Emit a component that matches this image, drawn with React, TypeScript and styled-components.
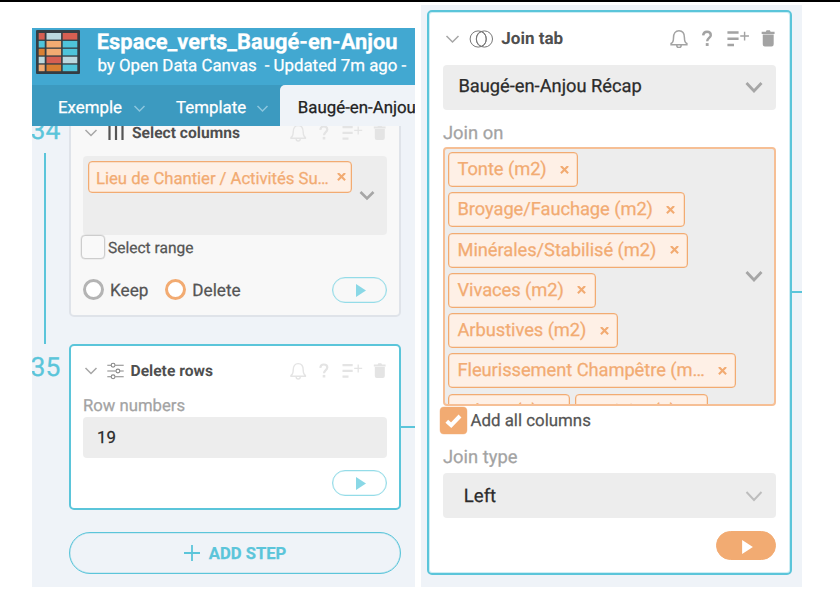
import React from "react";
import styled, { createGlobalStyle, css } from "styled-components";

const color = {
  cyan: "#5bc5da",
  orange: "#f2ab72",
  orangeSoft: "#f6bf95",
  chip: "#fef0e6",
  canvas: "#eff3f8",
  field: "#ededed",
};

const GlobalStyle = createGlobalStyle`
  *, *::before, *::after { box-sizing: border-box; }
  body {
    margin: 0;
    background: #fff;
    font-family: Roboto, "Liberation Sans", sans-serif;
    text-rendering: geometricPrecision;
    -webkit-text-stroke: 0.25px currentColor;
  }
  svg { display: block; flex: none; }
`;

const Screen = styled.div`
  width: 840px;
  height: 599px;
  overflow: hidden;
  background: #fff;
  border-top: 2px solid #000;
`;

const Panes = styled.div`
  display: flex;
  align-items: flex-start;
  padding-left: 32px;
`;

const StepsPane = styled.section`
  width: 382.6px;
  height: 559px;
  margin-top: 26px;
  overflow: hidden;
  display: flex;
  flex-direction: column;
  background: ${color.canvas};
`;

const JoinPane = styled.section`
  width: 381px;
  height: 582px;
  margin: 3px 0 0 6.4px;
  padding: 5px 0 0 6.5px;
  display: flex;
  align-items: flex-start;
  background: ${color.canvas};
`;

const Header = styled.header`
  flex: none;
  height: 57px;
  display: flex;
  padding: 2px 0 0 3.5px;
  color: #fff;
  background: #42a8d1;
`;

const Titles = styled.div`
  margin-left: 17.3px;
  padding-top: 1px;
  white-space: nowrap;
`;

const Title = styled.h1`
  margin: 0;
  font-size: 21.9px;
  line-height: 24px;
  font-weight: 700;
`;

const Byline = styled.div`
  display: flex;
  gap: 8px;
  font-size: 16.85px;
  line-height: 22px;
  padding-left: 0.6px;
`;

const TabBar = styled.nav`
  flex: none;
  height: 41px;
  display: flex;
  background: #3c9ac0;
  color: #fff;
`;

const Tab = styled.div<{ $width: number; $inset: number; $active?: boolean }>`
  width: ${(p) => p.$width}px;
  flex: none;
  display: flex;
  align-items: center;
  justify-content: space-between;
  padding: 4px 11.5px 0 ${(p) => p.$inset}px;
  font-size: 16.85px;
  white-space: nowrap;
  ${(p) =>
    p.$active &&
    css`
      color: #222;
      background: ${color.canvas};
      border-top-left-radius: 5px;
    `}

  svg {
    margin-top: 2px;
  }
`;

const StepList = styled.div`
  flex: 1;
  overflow: hidden;
`;

const Step = styled.div<{ $top: number }>`
  display: flex;
  align-items: flex-start;
  margin-top: ${(p) => p.$top}px;
`;

const Gutter = styled.div<{ $height: number }>`
  width: 37px;
  height: ${(p) => p.$height}px;
  flex: none;
  display: flex;
  flex-direction: column;
  color: ${color.cyan};
`;

const StepNumber = styled.div`
  margin: 9.7px 0 0 -1.5px;
  font-size: 26.5px;
  line-height: 30px;
`;

const Track = styled.div`
  flex: 1;
  width: 2px;
  margin: 7px 0 0 12px;
  background: ${color.cyan};
`;

const Card = styled.article<{ $height: number; $idle?: boolean }>`
  width: 332px;
  height: ${(p) => p.$height}px;
  flex: none;
  padding: 5px 12px 0;
  border: 2px solid ${(p) => (p.$idle ? "#dfe3e9" : color.cyan)};
  border-radius: 5px;
  background: ${(p) => (p.$idle ? "#f8f8f8" : "#fff")};
`;

const JoinCard = styled(Card)`
  width: 365px;
  padding: 5px 14px 0 13.5px;
  box-shadow: inset 0 0 0 1px rgba(91, 197, 218, 0.3);
`;

const Connector = styled.div<{ $top: number }>`
  flex: 1;
  height: 2px;
  margin-top: ${(p) => p.$top}px;
  background: ${color.cyan};
`;

const CardHead = styled.div<{ $large?: boolean }>`
  height: ${(p) => (p.$large ? 42 : 40)}px;
  display: flex;
  align-items: center;
  padding: ${(p) => (p.$large ? 1 : 0)}px 1.5px 0 ${(p) => (p.$large ? 1.8 : 1)}px;
  color: #9b9b9b;
`;

const KindIcon = styled.span<{ $left: number; $width: number }>`
  margin-left: ${(p) => p.$left}px;
  width: ${(p) => p.$width}px;
`;

const CardTitle = styled.h2<{ $size: number }>`
  flex: 1;
  margin: 0;
  font-size: ${(p) => p.$size}px;
  line-height: 20px;
  font-weight: 700;
  color: #4f4f4f;
  -webkit-text-stroke-width: 0;
`;

const Label = styled.div<{ $top: number; $large?: boolean }>`
  margin-top: ${(p) => p.$top}px;
  font-size: ${(p) => (p.$large ? 18.35 : 16.7)}px;
  line-height: 20px;
  color: #a3a3a3;
`;

const Field = styled.div<{ $top: number; $height: number; $inset: number; $size: number; $shift?: number }>`
  height: ${(p) => p.$height}px;
  margin-top: ${(p) => p.$top}px;
  padding: ${(p) => Math.max(p.$shift ?? 0, 0)}px 13px ${(p) => Math.max(-(p.$shift ?? 0), 0)}px
    ${(p) => p.$inset}px;
  display: flex;
  align-items: center;
  justify-content: space-between;
  border-radius: 4px;
  font-size: ${(p) => p.$size}px;
  white-space: nowrap;
  color: #2b2b2b;
  background: ${color.field};
`;

const MultiField = styled.div<{ $top: number; $height: number; $focus?: boolean }>`
  height: ${(p) => p.$height}px;
  margin-top: ${(p) => p.$top}px;
  display: flex;
  align-items: center;
  overflow: hidden;
  border-radius: 4px;
  background: ${color.field};
  ${(p) =>
    p.$focus
      ? css`
          border: 2px solid ${color.orangeSoft};
          padding: 0 11px 0 3px;
        `
      : css`
          padding: 0 12px 0 4.7px;
        `}
`;

const Chips = styled.div<{ $top: number }>`
  flex: 1;
  align-self: flex-start;
  display: flex;
  flex-wrap: wrap;
  gap: 5.25px 5px;
  padding-top: ${(p) => p.$top}px;
`;

const Chip = styled.span<{ $small?: boolean }>`
  display: flex;
  align-items: center;
  height: ${(p) => (p.$small ? 32 : 35)}px;
  padding: ${(p) => (p.$small ? "3.5px 5.5px 0 7.4px" : "1px 8.5px 0 8.5px")};
  gap: ${(p) => (p.$small ? 8 : 13.3)}px;
  border: 1px solid ${color.orange};
  box-shadow: inset 0 0 0 0.5px rgba(242, 171, 114, 0.5);
  border-radius: 4px;
  font-size: ${(p) => (p.$small ? 16.73 : 18.3)}px;
  letter-spacing: -0.05px;
  line-height: 20px;
  white-space: nowrap;
  color: ${color.orange};
  background: ${color.chip};

  svg {
    margin-bottom: ${(p) => (p.$small ? 2 : 0)}px;
  }
`;

const CheckRow = styled.div<{ $large?: boolean }>`
  display: flex;
  align-items: center;
  margin: ${(p) => (p.$large ? "1px 0 0 -3px" : "0.8px 0 0 -2.5px")};
  gap: 3.5px;
  font-size: ${(p) => (p.$large ? 16.87 : 15.52)}px;
  line-height: 20px;
  color: #555;
`;

const CheckText = styled.span`
  padding-top: 1px;
`;

const Checkbox = styled.span<{ $checked?: boolean }>`
  width: ${(p) => (p.$checked ? 27 : 24)}px;
  height: ${(p) => (p.$checked ? 27 : 24)}px;
  display: flex;
  align-items: center;
  justify-content: center;
  border-radius: 4px;
  background: ${(p) => (p.$checked ? color.orange : "#f9f9f9")};
  border: ${(p) => (p.$checked ? 0 : 1)}px solid #cdcdcd;
  box-shadow: 0 0 0 0.5px ${(p) => (p.$checked ? "rgba(242,171,114,.4)" : "rgba(205,205,205,.5)")};
`;

const ActionRow = styled.div<{ $top: number }>`
  display: flex;
  align-items: center;
  justify-content: flex-end;
  margin-top: ${(p) => p.$top}px;
`;

const Radio = styled.span<{ $selected?: boolean }>`
  width: 21px;
  height: 21px;
  border-radius: 50%;
  border: 3px solid ${(p) => (p.$selected ? color.orange : "#b4b4b4")};
  background: #fff;
`;

const ChoiceText = styled.span`
  margin: 0 17px 0 6px;
  padding-top: 3px;
  font-size: 17.15px;
  line-height: 20px;
  color: #555;
`;

const Spacer = styled.span`
  flex: 1;
`;

const RunButton = styled.button<{ $filled?: boolean }>`
  width: ${(p) => (p.$filled ? 60 : 55)}px;
  height: ${(p) => (p.$filled ? 29 : 26)}px;
  padding: 2px 0 0 2.5px;
  display: flex;
  align-items: center;
  justify-content: center;
  border-radius: 15px;
  border: 1px solid ${(p) => (p.$filled ? color.orange : "#94dce8")};
  box-shadow: ${(p) => (p.$filled ? "none" : "inset 0 0 0 .5px rgba(148,220,232,.5)")};
  color: ${(p) => (p.$filled ? "#fff" : "#8ad8e6")};
  background: ${(p) => (p.$filled ? color.orange : "transparent")};
`;

const AddStep = styled.button`
  width: 332px;
  height: 42px;
  margin: 22px 0 0 37px;
  padding: 1px 0 0;
  display: flex;
  align-items: center;
  justify-content: center;
  gap: 9px;
  border: 1px solid ${color.cyan};
  border-radius: 21px;
  box-shadow: inset 0 0 0 0.5px rgba(91, 197, 218, 0.4);
  font: 700 16.64px Roboto, sans-serif;
  color: ${color.cyan};
  background: transparent;
`;

const ToolIcons = styled.svg<{ $faint?: boolean }>`
  color: ${(p) => (p.$faint ? "#e4e4e4" : "#a3a3a3")};
`;

const Chevron = ({ w = 12, h = 6.5, sw = 1.5, stroke = "#a6a6a6" }) => (
  <svg width={w + 2} height={h + 3} viewBox={`-1 -1.5 ${w + 2} ${h + 3}`} fill="none">
    <path d={`M.5 .5 L${w / 2} ${h - 0.5} L${w - 0.5} .5`} stroke={stroke} strokeWidth={sw} />
  </svg>
);

const Cross = () => (
  <svg width="9" height="9" viewBox="0 0 9 9" fill="none">
    <path d="M.9 0 8.1 7.2 M8.1 0 .9 7.2" stroke={color.orange} strokeWidth="2.1" />
  </svg>
);

const Play = ({ w = 10, h = 13 }) => (
  <svg width={w} height={h} viewBox="0 0 10 13">
    <path d="M0 0 10 6.5 0 13Z" fill="currentColor" />
  </svg>
);

const Tools = ({ faint }: { faint?: boolean }) => (
  <ToolIcons
    $faint={faint}
    width={faint ? 96 : 105}
    height={faint ? 18 : 19.7}
    viewBox="0 0 96 18"
    fill="none"
    stroke="currentColor"
  >
    <path
      d="M1 13.3c1.9-1 2.2-2.2 2.2-5.4 0-3.7 1.8-6.3 5-6.3s5 2.6 5 6.3c0 3.2.3 4.4 2.2 5.4v1H1z M6.2 15a2 2 0 0 0 4 0"
      strokeWidth="1.4"
    />
    <path d="M30.3 5.9c.2-2.2 1.4-3.4 3.5-3.4 2.2 0 3.5 1.2 3.5 3.1 0 2.5-3.3 2.7-3.3 5.6" strokeWidth="2.2" />
    <path d="M32.7 12.9h2.6v2.6h-2.6z" fill="currentColor" stroke="none" />
    <path d="M52.5 3.2h10.2M52.5 8.9h10.2M52.5 14.6h6" strokeWidth="2.2" />
    <path d="M68.2 2.4v8M64.2 6.4h8" strokeWidth="1.3" />
    <path d="M83.8 2.4h3.8l.7-1.2h3l.7 1.2h3.6v2.2H83.8z M84.8 5h10v9a2 2 0 0 1-2 2h-6a2 2 0 0 1-2-2z" fill="currentColor" stroke="none" />
  </ToolIcons>
);

const ColumnsIcon = () => (
  <svg width="17" height="18" viewBox="0 0 17 18">
    <path d="M2.5 1v15M9 1v15M15.5 1v15" stroke="#555" strokeWidth="2.2" />
  </svg>
);

const SlidersIcon = () => (
  <svg width="17" height="18" viewBox="0 0 17 18" fill="none" stroke="#888" strokeWidth="1.1">
    <path d="M.3 3.2H4M8.2 3.2h8.5M.3 9h8.5M13 9h3.7M.3 14.8H4M8.2 14.8h8.5" />
    <circle cx="6.1" cy="3.2" r="1.9" />
    <circle cx="10.9" cy="9" r="1.9" />
    <circle cx="6.1" cy="14.8" r="1.9" />
  </svg>
);

const JoinIcon = () => (
  <svg width="24" height="18" viewBox="0 0 24 18" fill="none" stroke="#777" strokeWidth="1">
    <circle cx="9.2" cy="9" r="8.1" />
    <circle cx="15.4" cy="9" r="8.1" />
    <ellipse cx="12.3" cy="9" rx="4.9" ry="7.3" />
  </svg>
);

const CheckIcon = () => (
  <svg width="17" height="14" viewBox="0 0 17 14" fill="none">
    <path d="M1.8 7.2 6.2 11.2 15 2" stroke="#fff" strokeWidth="4" />
  </svg>
);

const logoRows = [
  ["#d65f52", "#bcd8de", "#d65f52"],
  ["#4fc4da", "#f2ab72", "#4fc4da"],
  ["#d97f33", "#f2ab72", "#4fc4da"],
  ["#bcd8de", "#d65f52", "#bcd8de"],
  ["#f2ab72", "#d97f33", "#4fc4da"],
];
const logoColumns = [
  [2.7, 6],
  [10.5, 14.6],
  [26.7, 14.6],
];

const Logo = () => (
  <svg width="44" height="44" viewBox="0 0 44 44">
    <rect width="44" height="44" rx="1" fill="#343d43" />
    {logoRows.map((row, r) =>
      row.map((fill, c) => (
        <rect key={`${r}${c}`} x={logoColumns[c][0]} y={3 + r * 7.9} width={logoColumns[c][1]} height="6.6" fill={fill} />
      ))
    )}
  </svg>
);

const joinColumns = [
  "Tonte (m2)",
  "Broyage/Fauchage (m2)",
  "Minérales/Stabilisé (m2)",
  "Vivaces (m2)",
  "Arbustives (m2)",
  "Fleurissement Champêtre (m…",
  "Arbres (u)",
  "Topiaire (u)",
];

export default function App() {
  return (
    <>
      <GlobalStyle />
      <Screen>
        <Panes>
          <StepsPane>
            <Header>
              <Logo />
              <Titles>
                <Title>Espace_verts_Baugé-en-Anjou</Title>
                <Byline>
                  <span>by Open Data Canvas</span>
                  <span>- Updated 7m ago -</span>
                </Byline>
              </Titles>
            </Header>
            <TabBar>
              <Tab $width={125.5} $inset={26}>
                Exemple
                <Chevron w={11} h={6} stroke="#8cc6de" />
              </Tab>
              <Tab $width={122.5} $inset={18.5}>
                Template
                <Chevron w={11} h={6} stroke="#8cc6de" />
              </Tab>
              <Tab $width={134.6} $inset={17.8} $active>
                Baugé-en-Anjou
              </Tab>
            </TabBar>
            <StepList>
              <Step $top={-20}>
                <Gutter $height={237.5}>
                  <StepNumber>34</StepNumber>
                  <Track />
                </Gutter>
                <Card $height={211} $idle>
                  <CardHead>
                    <Chevron />
                    <KindIcon $left={9} $width={25}>
                      <ColumnsIcon />
                    </KindIcon>
                    <CardTitle $size={15.6}>Select columns</CardTitle>
                    <Tools faint />
                  </CardHead>
                  <MultiField $top={3} $height={78.5}>
                    <Chips $top={5}>
                      <Chip $small>
                        Lieu de Chantier / Activités Su…
                        <Cross />
                      </Chip>
                    </Chips>
                    <Chevron w={14} h={7.5} sw={2.6} />
                  </MultiField>
                  <CheckRow>
                    <Checkbox />
                    <CheckText>Select range</CheckText>
                  </CheckRow>
                  <ActionRow $top={17.5}>
                    <Radio />
                    <ChoiceText>Keep</ChoiceText>
                    <Radio $selected />
                    <ChoiceText>Delete</ChoiceText>
                    <Spacer />
                    <RunButton>
                      <Play />
                    </RunButton>
                  </ActionRow>
                </Card>
              </Step>
              <Step $top={0}>
                <Gutter $height={166}>
                  <StepNumber>35</StepNumber>
                </Gutter>
                <Card $height={166}>
                  <CardHead>
                    <Chevron />
                    <KindIcon $left={8.5} $width={24}>
                      <SlidersIcon />
                    </KindIcon>
                    <CardTitle $size={15.6}>Delete rows</CardTitle>
                    <Tools faint />
                  </CardHead>
                  <Label $top={6}>Row numbers</Label>
                  <Field $top={0.5} $height={40.5} $inset={14} $size={16.8} $shift={1.5}>
                    19
                  </Field>
                  <ActionRow $top={12}>
                    <RunButton>
                      <Play />
                    </RunButton>
                  </ActionRow>
                </Card>
                <Connector $top={82} />
              </Step>
              <AddStep>
                <svg width="16" height="16" viewBox="0 0 16 16">
                  <path d="M8 0v16M0 8h16" stroke="currentColor" strokeWidth="1.8" />
                </svg>
                ADD STEP
              </AddStep>
            </StepList>
          </StepsPane>

          <JoinPane>
            <JoinCard $height={565}>
              <CardHead $large>
                <Chevron w={13} h={7} />
                <KindIcon $left={9.5} $width={32}>
                  <JoinIcon />
                </KindIcon>
                <CardTitle $size={17.04}>Join tab</CardTitle>
                <Tools />
              </CardHead>
              <Field $top={6} $height={45} $inset={15.4} $size={18.3} $shift={-1.5}>
                Baugé-en-Anjou Récap
                <Chevron w={16} h={9} sw={2.8} />
              </Field>
              <Label $top={13.5} $large>
                Join on
              </Label>
              <MultiField $top={3} $height={259.5} $focus>
                <Chips $top={3.5}>
                  {joinColumns.map((name) => (
                    <Chip key={name}>
                      {name}
                      <Cross />
                    </Chip>
                  ))}
                </Chips>
                <Chevron w={16} h={9} sw={2.8} />
              </MultiField>
              <CheckRow $large>
                <Checkbox $checked>
                  <CheckIcon />
                </Checkbox>
                Add all columns
              </CheckRow>
              <Label $top={14} $large>
                Join type
              </Label>
              <Field $top={5} $height={45} $inset={20.8} $size={18.6}>
                Left
                <Chevron w={16} h={9} sw={1.9} stroke="#bdbdbd" />
              </Field>
              <ActionRow $top={13}>
                <RunButton $filled>
                  <Play w={11} h={14} />
                </RunButton>
              </ActionRow>
            </JoinCard>
            <Connector $top={281} />
          </JoinPane>
        </Panes>
      </Screen>
    </>
  );
}
